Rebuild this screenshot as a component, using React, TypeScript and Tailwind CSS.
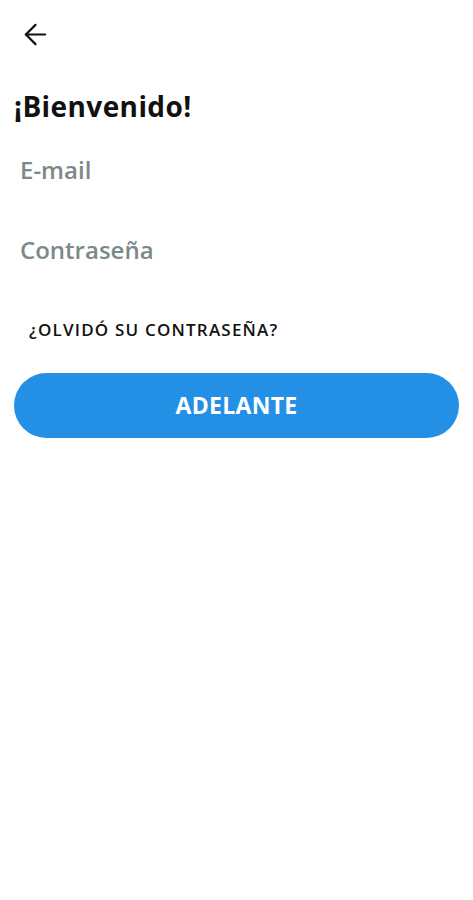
import { ArrowLeft } from 'lucide-react';

export default function App() {
  return (
    <div className="min-h-[900px] w-full bg-white" style={{ fontFamily: '"Open Sans", sans-serif' }}>
      <div className="px-[14px] pt-[18px]">
        <button className="ml-[5px] block text-[#111]">
          <ArrowLeft className="w-[33px] h-[33px]" strokeWidth={1.6} />
        </button>

        <h1 className="mt-[36px] text-[28px] font-bold leading-[38px] tracking-[0.4px] text-[#111]">¡Bienvenido!</h1>

        <input
          type="email"
          placeholder="E-mail"
          className="mt-[29px] block h-[32px] w-full px-[6px] text-[24px] font-semibold leading-[32px] outline-none placeholder:text-[#7b8a88]"
        />

        <input
          type="password"
          placeholder="Contraseña"
          className="mt-[48px] block h-[32px] w-full px-[6px] text-[24px] font-semibold leading-[32px] outline-none placeholder:text-[#7b8a88]"
        />

        <p className="mt-[52px] pl-[15px] text-[17px] font-semibold leading-[24px] tracking-[1.2px] text-[#111]">
          ¿OLVIDÓ SU CONTRASEÑA?
        </p>

        <button className="mt-[31px] block h-[65px] w-full rounded-full bg-[#2390e6] text-[23px] font-bold tracking-[0.3px] text-white">
          ADELANTE
        </button>
      </div>
    </div>
  );
}
